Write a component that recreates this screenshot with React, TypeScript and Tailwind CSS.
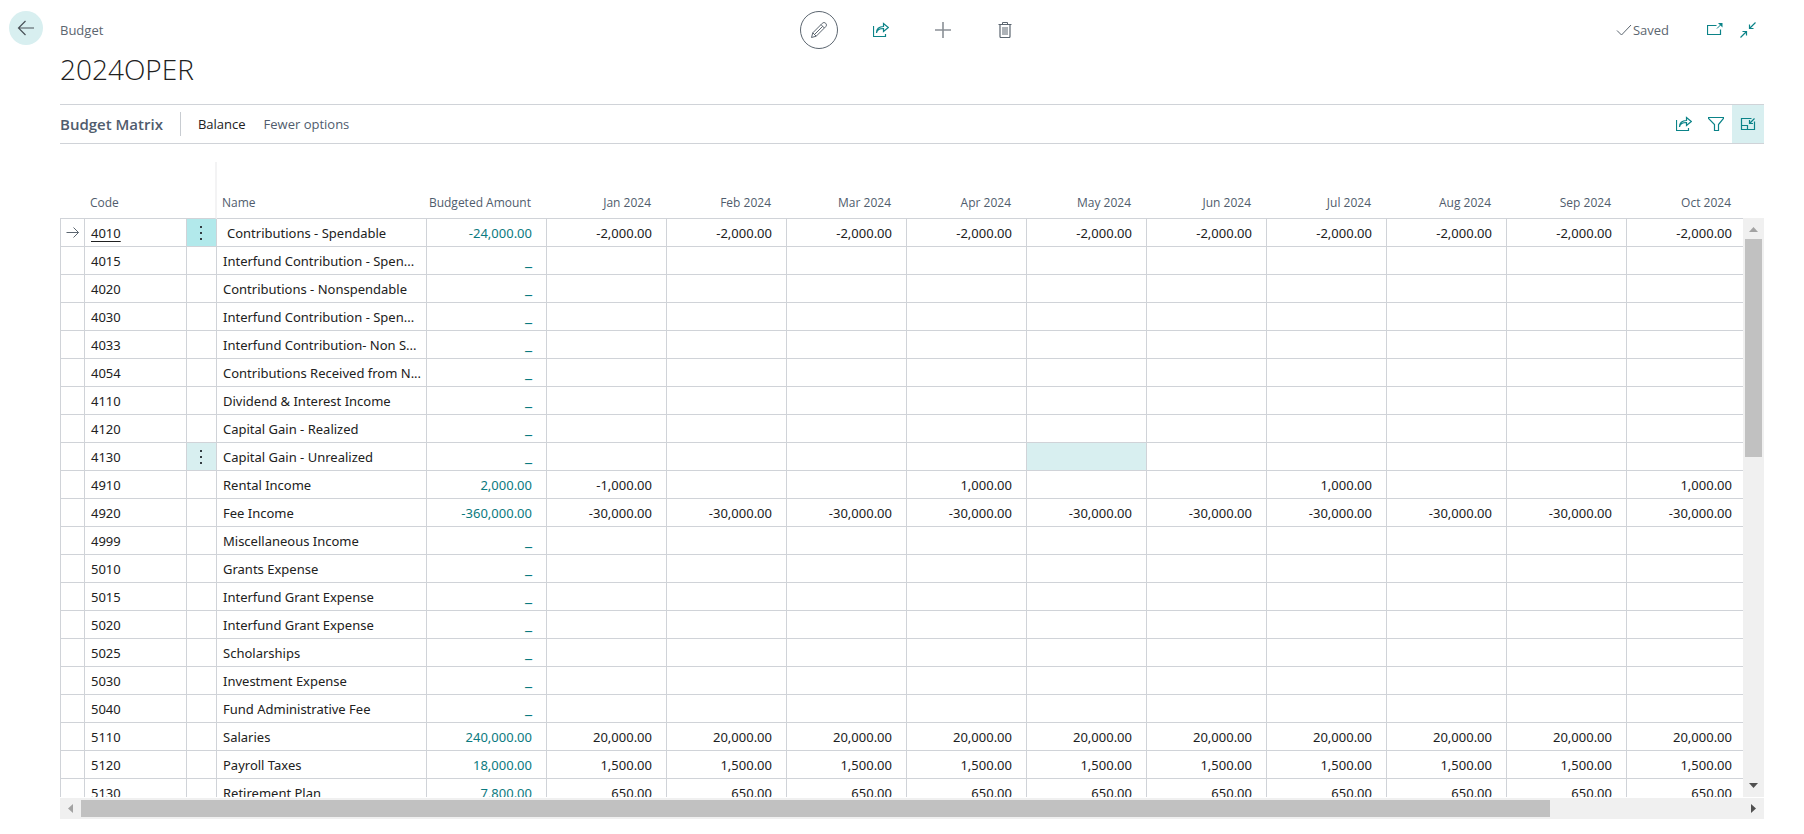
import type { ReactNode } from "react";

const TEAL = "#0b8388";
const SLATE = "#5c6670";

const months = ["Jan", "Feb", "Mar", "Apr", "May", "Jun", "Jul", "Aug", "Sep", "Oct"];

interface BudgetRow {
	code: string;
	name: string;
	total?: string;
	amounts?: string[];
	state?: "current" | "hover";
}

const every = (value: string) => months.map(() => value);

const rows: BudgetRow[] = [
	{ code: "4010", name: "Contributions - Spendable", total: "-24,000.00", amounts: every("-2,000.00"), state: "current" },
	{ code: "4015", name: "Interfund Contribution - Spen..." },
	{ code: "4020", name: "Contributions - Nonspendable" },
	{ code: "4030", name: "Interfund Contribution - Spen..." },
	{ code: "4033", name: "Interfund Contribution- Non S..." },
	{ code: "4054", name: "Contributions Received from N..." },
	{ code: "4110", name: "Dividend & Interest Income" },
	{ code: "4120", name: "Capital Gain - Realized" },
	{ code: "4130", name: "Capital Gain - Unrealized", state: "hover" },
	{
		code: "4910",
		name: "Rental Income",
		total: "2,000.00",
		amounts: ["-1,000.00", "", "", "1,000.00", "", "", "1,000.00", "", "", "1,000.00"],
	},
	{ code: "4920", name: "Fee Income", total: "-360,000.00", amounts: every("-30,000.00") },
	{ code: "4999", name: "Miscellaneous Income" },
	{ code: "5010", name: "Grants Expense" },
	{ code: "5015", name: "Interfund Grant Expense" },
	{ code: "5020", name: "Interfund Grant Expense" },
	{ code: "5025", name: "Scholarships" },
	{ code: "5030", name: "Investment Expense" },
	{ code: "5040", name: "Fund Administrative Fee" },
	{ code: "5110", name: "Salaries", total: "240,000.00", amounts: every("20,000.00") },
	{ code: "5120", name: "Payroll Taxes", total: "18,000.00", amounts: every("1,500.00") },
	{ code: "5130", name: "Retirement Plan", total: "7,800.00", amounts: every("650.00") },
];

function Icon({ color = TEAL, size = 16, children }: { color?: string; size?: number; children: ReactNode }) {
	return (
		<svg width={size} height={size} viewBox={`0 0 ${size} ${size}`} fill="none" stroke={color} strokeWidth="1">
			{children}
		</svg>
	);
}

function ShareIcon() {
	return (
		<Icon>
			<path d="M0.500 4V14.500H12.500V12" strokeWidth="1.200" />
			<path d="M3.500 11C4 8 6.500 6.500 10.500 6.500V9.500L15.300 5.500L10.500 1.500V4.500C6 4.500 3.500 7 3.500 11Z" strokeWidth="1.200" />
		</Icon>
	);
}

function PencilIcon() {
	return (
		<Icon color={SLATE} size={18}>
			<path d="M1.500 16.500L2.800 11.800L12.300 2.300C13.300 1.300 14.700 1.300 15.700 2.300C16.700 3.300 16.700 4.700 15.700 5.700L6.200 15.200L1.500 16.500Z" />
			<path d="M2.800 11.800L6.200 15.200M11 3.600L14.400 7M4.500 13.500L12.700 5.300" />
		</Icon>
	);
}

function PlusIcon() {
	return (
		<Icon color="#8a9096">
			<path d="M8 0V16M0 8H16" strokeWidth="1.600" />
		</Icon>
	);
}

function TrashIcon() {
	return (
		<Icon color={SLATE}>
			<path d="M1.500 2.500H14.500M5.500 2.500V0.500H10.500V2.500" />
			<path d="M3 2.500V14.500C3 15.200 3.300 15.500 4 15.500H12C12.700 15.500 13 15.200 13 14.500V2.500" strokeWidth="1.200" />
			<path d="M6 5V13M8 5V13M10 5V13" />
		</Icon>
	);
}

function PopOutIcon() {
	return (
		<Icon>
			<path d="M9.500 3.500H0.500V12.500H13.500V7.500" strokeWidth="1.200" />
			<path d="M10 6.500L14.500 2" />
			<path d="M11 1H15.500V5.500Z" fill={TEAL} stroke="none" />
		</Icon>
	);
}

function CollapseIcon() {
	return (
		<Icon>
			<path d="M15.500 0.500L9.500 6.500M9.500 2.500V6.500H13.500" strokeWidth="1.200" />
			<path d="M0.500 15.500L6.500 9.500M2.500 9.500H6.500V13.500" strokeWidth="1.200" />
		</Icon>
	);
}

function FilterIcon() {
	return (
		<Icon>
			<path d="M0.500 1.500H15.500V2.500L10.500 8.500V14.500H6.500V8.500L0.500 2.500Z" strokeWidth="1.200" />
		</Icon>
	);
}

function FactBoxIcon() {
	return (
		<Icon>
			<path d="M11.500 2.500H1.500V13.500H14.500V5.500" strokeWidth="1.200" />
			<path d="M1.500 9.500H7.500V13.500M14.500 2.500L10 7M9.500 4V7.500H13" strokeWidth="1.200" />
		</Icon>
	);
}

function Kebab() {
	return (
		<svg width="4" height="14" viewBox="0 0 4 14" fill="#333c42" aria-hidden="true">
			<rect x="0" y="0" width="2" height="2" />
			<rect x="0" y="6" width="2" height="2" />
			<rect x="0" y="12" width="2" height="2" />
		</svg>
	);
}

function ToolButton({ label, className = "", children }: { label: string; className?: string; children: ReactNode }) {
	return (
		<button aria-label={label} className={`flex items-center justify-center ${className}`}>
			{children}
		</button>
	);
}

function Header() {
	return (
		<header className="pt-[11px]">
			<div className="grid h-[38px] grid-cols-[1fr_auto_1fr] items-center">
				<span className="pt-0.5 text-[13px] text-[#5c6670]">Budget</span>
				<div className="flex gap-6">
					<ToolButton label="Edit" className="size-[38px] rounded-full border border-[#5c6670]">
						<PencilIcon />
					</ToolButton>
					<ToolButton label="Share" className="size-[38px]">
						<ShareIcon />
					</ToolButton>
					<ToolButton label="New" className="size-[38px]">
						<PlusIcon />
					</ToolButton>
					<ToolButton label="Delete" className="size-[38px]">
						<TrashIcon />
					</ToolButton>
				</div>
				<div className="flex items-center justify-end pr-2">
					<Icon color={SLATE}>
						<path d="M1 8.500L5.500 13L15 3" />
					</Icon>
					<span className="pt-0.5 pl-px text-[13px] text-[#5c6670]">Saved</span>
					<ToolButton label="Open in new window" className="ml-[38px]">
						<PopOutIcon />
					</ToolButton>
					<ToolButton label="Collapse" className="ml-[17px]">
						<CollapseIcon />
					</ToolButton>
				</div>
			</div>
			<h1 className="h-[55px] pt-0.5 text-[28px] leading-9 font-light text-[#212121]">2024OPER</h1>
		</header>
	);
}

function ActionBar() {
	return (
		<div className="flex h-10 items-center border-y border-[#d0d3d8]">
			<h2 className="text-[15px] font-semibold text-[#505c6d]">Budget Matrix</h2>
			<div className="ml-[17px] h-6 border-l border-[#c8ccd1]" />
			<button className="ml-[17px] pt-0.5 text-[13px] text-[#212121]">Balance</button>
			<button className="ml-[18px] pt-0.5 text-[13px] text-[#505c6d]">Fewer options</button>
			<div className="ml-auto flex h-full items-center">
				<ToolButton label="Share list" className="h-full w-8">
					<ShareIcon />
				</ToolButton>
				<ToolButton label="Filter" className="h-full w-8">
					<FilterIcon />
				</ToolButton>
				<ToolButton label="Toggle fact box" className="h-full w-8 bg-[#d8eff0]">
					<FactBoxIcon />
				</ToolButton>
			</div>
		</div>
	);
}

const cell = "border-r border-b border-[#d0d3d8] p-0";
const head = "border-b border-[#d0d3d8] pb-1.5 align-bottom font-normal";

function MatrixRow({ row }: { row: BudgetRow }) {
	const current = row.state === "current";
	const hover = row.state === "hover";

	return (
		<tr className="h-7">
			<td className={`${cell} border-l`}>
				{current && (
					<svg className="mx-auto" width="14" height="12" viewBox="0 0 14 12" fill="none" stroke="#5c6670">
						<path d="M0.500 5.500H12.500M7.500 0.500L12.500 5.500L7.500 10.500" />
					</svg>
				)}
			</td>
			<td className={`${cell} pl-1.5`}>
				{current ? (
					<a href="#4010" className="underline underline-offset-3">
						{row.code}
					</a>
				) : (
					row.code
				)}
			</td>
			<td className={`${cell} ${current ? "bg-[#b2e9eb]" : hover ? "bg-[#d8eff0]" : ""}`}>
				{row.state && (
					<button aria-label={`Options for ${row.code}`} className="flex w-full justify-center">
						<Kebab />
					</button>
				)}
			</td>
			<td className={`${cell} overflow-hidden whitespace-nowrap ${current ? "pl-2.5" : "pl-1.5"}`}>{row.name}</td>
			<td className={`${cell} pr-3.5 text-right`}>
				<a href={`#budget-${row.code}`} className={`text-[#0b7a80] ${row.total ? "" : "text-base leading-[18px]"}`}>
					{row.total ?? "_"}
				</a>
			</td>
			{months.map((month, i) => (
				<td key={month} className={`${cell} pr-3.5 text-right ${hover && month === "May" ? "bg-[#d8eff0]" : ""}`}>
					{row.amounts?.[i]}
				</td>
			))}
		</tr>
	);
}

function Matrix() {
	return (
		<div className="mt-[18px] flex min-h-0 flex-1">
			<div className="min-w-0 flex-1 overflow-hidden">
				<table className="w-[1687px] table-fixed border-separate border-spacing-0 font-['Noto_Sans','Open_Sans',sans-serif] text-[13px] leading-[18px] text-[#212121]">
					<colgroup>
						<col className="w-[25px]" />
						<col className="w-[102px]" />
						<col className="w-[30px]" />
						<col className="w-[210px]" />
						<col className="w-[120px]" />
						{months.map((month) => (
							<col key={month} className="w-[120px]" />
						))}
					</colgroup>
					<thead className="font-['Open_Sans','Noto_Sans',sans-serif]">
						<tr className="h-[57px] text-[12px] text-[#505c6d]">
							<th className={head} />
							<th className={`${head} pl-[5px] text-left`}>Code</th>
							<th className={`${head} border-r-2 border-r-[#f3f3f4]`} />
							<th className={`${head} pl-[5px] text-left`}>Name</th>
							<th className={`${head} pr-4 text-right`}>Budgeted Amount</th>
							{months.map((month) => (
								<th key={month} className={`${head} pr-4 text-right`}>
									{month} 2024
								</th>
							))}
						</tr>
					</thead>
					<tbody>
						{rows.map((row) => (
							<MatrixRow key={row.code} row={row} />
						))}
					</tbody>
				</table>
			</div>

			{/* Vertical scrollbar, starts below the column headings */}
			<div className="mt-14 flex w-[21px] flex-col items-center bg-[#f0f0f0]">
				<svg width="21" height="21" viewBox="0 0 21 21" fill="#a3a3a3">
					<path d="M6 14L10.500 9L15 14Z" />
				</svg>
				<div className="h-[218px] w-[17px] bg-[#c1c1c1]" />
				<svg className="mt-auto" width="21" height="21" viewBox="0 0 21 21" fill="#505050">
					<path d="M6 7L10.500 12L15 7Z" />
				</svg>
			</div>
		</div>
	);
}

function HorizontalScrollbar() {
	return (
		<div className="mt-px flex h-[21px] shrink-0 items-center bg-[#f0f0f0]">
			<svg width="21" height="21" viewBox="0 0 21 21" fill="#a3a3a3">
				<path d="M13 6L8 10.500L13 15Z" />
			</svg>
			<div className="min-w-0 flex-1">
				<div className="h-[17px] w-[88.4%] bg-[#c1c1c1]" />
			</div>
			<svg width="21" height="21" viewBox="0 0 21 21" fill="#505050">
				<path d="M8 6L13 10.500L8 15Z" />
			</svg>
		</div>
	);
}

export default function App() {
	return (
		<div className="flex h-screen overflow-hidden bg-white font-['Open_Sans','Noto_Sans',sans-serif]">
			<nav className="w-15 shrink-0 pt-[11px] pl-[9px]">
				<ToolButton label="Back" className="size-[34px] rounded-full bg-[#d8eff0]">
					<Icon color="#4a5258" size={18}>
						<path d="M17 9H1.500M8.500 2L1.500 9L8.500 16" strokeWidth="1.200" />
					</Icon>
				</ToolButton>
			</nav>
			<main className="flex min-w-0 flex-1 flex-col pr-10 pb-[15px]">
				<Header />
				<ActionBar />
				<Matrix />
				<HorizontalScrollbar />
			</main>
		</div>
	);
}
